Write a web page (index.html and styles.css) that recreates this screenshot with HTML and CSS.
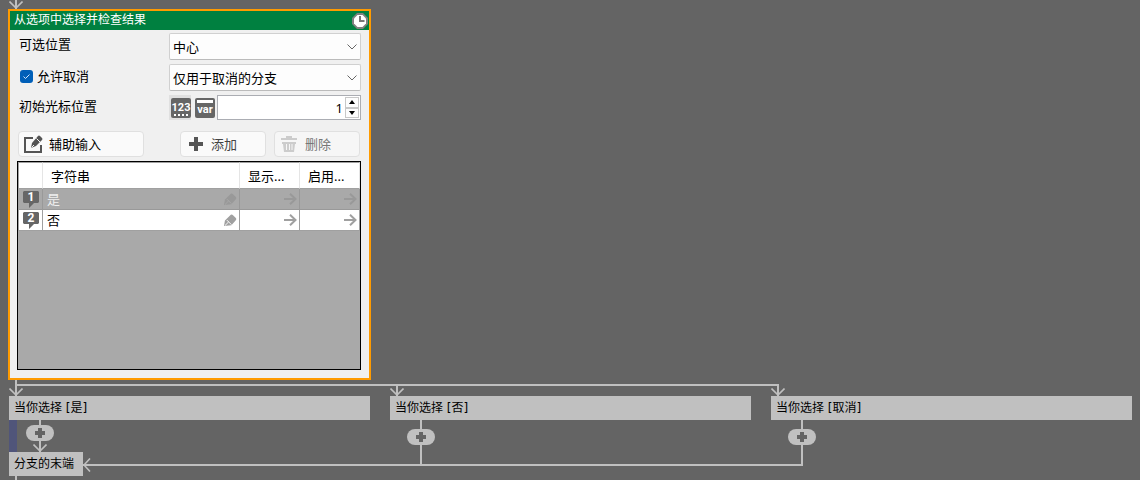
FILE: index.html
```html
<!DOCTYPE html>
<html lang="zh-CN">
<head>
    <meta charset="UTF-8">
    <meta name="viewport" content="width=device-width, initial-scale=1.0">
    <title>从选项中选择并检查结果</title>
    <link rel="stylesheet" href="styles.css">
</head>
<body>
    <!-- Shared icons -->
    <svg class="sprite" width="0" height="0" aria-hidden="true">
        <symbol id="head-down" viewBox="0 0 14 8">
            <path d="M.5.5 7 7 13.5.5" fill="none" stroke="currentColor" stroke-width="1.6"/>
        </symbol>
        <symbol id="chevron" viewBox="0 0 10 6">
            <path d="M.5.5 5 5 9.5.5" fill="none" stroke="currentColor"/>
        </symbol>
        <symbol id="pen" viewBox="0 0 14 14">
            <path d="M0 13 1 7 6.500 1.500Q8-.5 10 1.500L12.500 4Q14 5.500 12.500 7L8 12Z" fill="currentColor"/>
            <path d="M3 6.500 8 11.500M1 12.500 5 8.500" stroke="var(--cut)" fill="none"/>
        </symbol>
        <symbol id="arrow" viewBox="0 0 13 12">
            <path d="M0 6H11.500M6 .8 11.500 6 6 11.200" fill="none" stroke="currentColor" stroke-width="2"/>
        </symbol>
        <symbol id="bubble" viewBox="0 0 16 17">
            <path d="M1 0H15L16 1V11L15 12H11L6 17V12H1L0 11V1Z" fill="#666"/>
        </symbol>
        <symbol id="plus" viewBox="0 0 10 10">
            <path d="M3 0H7V3H10V7H7V10H3V7H0V3H3Z" fill="currentColor"/>
        </symbol>
    </svg>

    <main class="flow">
        <div class="entry">
            <svg class="head" width="14" height="8"><use href="#head-down"/></svg>
        </div>

        <section class="card">
            <header class="card-title">
                <h1>从选项中选择并检查结果</h1>
                <svg class="clock" width="16" height="16" viewBox="0 0 16 16">
                    <path d="M5 0H11L16 5V11L11 16H5L0 11V5Z" fill="#808080"/>
                    <path d="M5.500 2H10.500L14 5.500V10.500L10.500 14H5.500L2 10.500V5.500Z" fill="#fff"/>
                    <path d="M8 3V8H12.500" fill="none" stroke="#777" stroke-width="2"/>
                </svg>
            </header>

            <form class="card-body">
                <div class="row">
                    <label for="position">可选位置</label>
                    <div class="select">
                        <select id="position"><option>中心</option></select>
                        <svg width="10" height="6"><use href="#chevron"/></svg>
                    </div>
                </div>
                <div class="row">
                    <label class="check">
                        <input type="checkbox" checked>
                        <svg width="13" height="13" viewBox="0 0 13 13"><path d="M3.500 6.500 5.500 8.500 9.500 4.500" fill="none" stroke="#cfe4fa"/></svg>
                        允许取消
                    </label>
                    <div class="select">
                        <select aria-label="允许取消"><option>仅用于取消的分支</option></select>
                        <svg width="10" height="6"><use href="#chevron"/></svg>
                    </div>
                </div>
                <div class="row">
                    <label for="cursor">初始光标位置</label>
                    <div class="value">
                        <button type="button" class="mode active">
                            <svg width="20" height="20" viewBox="0 0 20 20">
                                <rect width="20" height="20" rx="2" fill="#666"/>
                                <text x="10" y="13" class="mode-text">123</text>
                                <path d="M3 17H17" stroke="#fff" stroke-width="2" stroke-dasharray="2 2"/>
                            </svg>
                        </button>
                        <button type="button" class="mode">
                            <svg width="20" height="20" viewBox="0 0 20 20">
                                <rect width="20" height="20" rx="2" fill="#666"/>
                                <path d="M2 3.500H18" stroke="#fff" stroke-width="3"/>
                                <text x="10" y="15" class="mode-text">var</text>
                            </svg>
                        </button>
                        <div class="spin">
                            <input id="cursor" type="number" value="1">
                            <div class="spin-buttons">
                                <button type="button" aria-label="+"><svg width="6" height="4" viewBox="0 0 6 4"><path d="M3 0 6 4H0Z"/></svg></button>
                                <button type="button" aria-label="-"><svg width="6" height="4" viewBox="0 0 6 4"><path d="M0 0H6L3 4Z"/></svg></button>
                            </div>
                        </div>
                    </div>
                </div>

                <div class="tools">
                    <button type="button" class="btn btn-wide">
                        <svg width="19" height="18" viewBox="0 0 19 18">
                            <path d="M9 3H1V17H17V10" fill="none" stroke="#555" stroke-width="2"/>
                            <path d="M7 13 8 8 14 1Q15 0 16.500 1.500L18 3Q19 4 18 5L12 11Z" fill="#555"/>
                            <path d="M12.500 3.500 16 7M7.500 12.500 10 10" stroke="#fafafa" fill="none"/>
                        </svg>
                        辅助输入
                    </button>
                    <button type="button" class="btn btn-add">
                        <svg width="14" height="14" viewBox="0 0 14 14"><path d="M5 0H9V5H14V9H9V14H5V9H0V5H5Z" fill="#555"/></svg>
                        添加
                    </button>
                    <button type="button" class="btn btn-delete" disabled>
                        <svg width="16" height="16" viewBox="0 0 16 16">
                            <path d="M5 2V0H11V2H16V4H0V2ZM1 6H15V8H14L13 16H3L2 8H1Z" fill="#ccc"/>
                            <path d="M5.500 8V14M8.500 8V14M11 8V14" stroke="#f6f6f6"/>
                        </svg>
                        删除
                    </button>
                </div>

                <div class="list">
                    <table>
                        <thead>
                            <tr><th class="col-no"></th><th>字符串</th><th class="col-flag">显示...</th><th class="col-flag">启用...</th></tr>
                        </thead>
                        <tbody>
                            <tr class="selected">
                                <td class="no"><svg width="16" height="17"><use href="#bubble"/><text x="8" y="10">1</text></svg></td>
                                <td><div class="cell">是<svg width="13" height="13"><use href="#pen"/></svg></div></td>
                                <td><div class="cell"><svg width="13" height="12"><use href="#arrow"/></svg></div></td>
                                <td><div class="cell"><svg width="13" height="12"><use href="#arrow"/></svg></div></td>
                            </tr>
                            <tr>
                                <td class="no"><svg width="16" height="17"><use href="#bubble"/><text x="8" y="10">2</text></svg></td>
                                <td><div class="cell">否<svg width="13" height="13"><use href="#pen"/></svg></div></td>
                                <td><div class="cell"><svg width="13" height="12"><use href="#arrow"/></svg></div></td>
                                <td><div class="cell"><svg width="13" height="12"><use href="#arrow"/></svg></div></td>
                            </tr>
                        </tbody>
                    </table>
                </div>
            </form>
        </section>

        <div class="branches">
            <section class="branch">
                <div class="fork"><svg class="head" width="14" height="8"><use href="#head-down"/></svg></div>
                <h2 class="node">当你选择 [是]</h2>
                <div class="path path-short">
                    <button type="button" class="add" aria-label="添加"><svg width="10" height="10"><use href="#plus"/></svg></button>
                    <svg class="head" width="14" height="8"><use href="#head-down"/></svg>
                </div>
                <div class="merge">
                    <div class="node node-end">分支的末端</div>
                    <div class="wire">
                        <svg width="8" height="14" viewBox="0 0 8 14"><path d="M7 .5 1 7 7 13.500" fill="none" stroke="currentColor" stroke-width="1.6"/></svg>
                    </div>
                </div>
                <div class="exit"></div>
            </section>

            <section class="branch">
                <div class="fork"><svg class="head" width="14" height="8"><use href="#head-down"/></svg></div>
                <h2 class="node">当你选择 [否]</h2>
                <div class="path">
                    <button type="button" class="add" aria-label="添加"><svg width="10" height="10"><use href="#plus"/></svg></button>
                </div>
                <div class="wire"></div>
            </section>

            <section class="branch">
                <div class="fork"><svg class="head" width="14" height="8"><use href="#head-down"/></svg></div>
                <h2 class="node">当你选择 [取消]</h2>
                <div class="path">
                    <button type="button" class="add" aria-label="添加"><svg width="10" height="10"><use href="#plus"/></svg></button>
                </div>
                <div class="wire wire-last"></div>
            </section>
        </div>
    </main>
</body>
</html>
```

FILE: styles.css
```css
* {
    box-sizing: border-box;
}

body {
    margin: 0;
    background-color: #646464;
    color: #000;
    font-family: "Noto Sans", "Noto Sans CJK SC", sans-serif;
    font-size: 13px;
    line-height: 20px;
    overflow: hidden;
}

svg {
    display: block;
    flex: none;
}

button, input, select {
    font: inherit;
    color: inherit;
    margin: 0;
    padding: 0;
}

h1, h2 {
    margin: 0;
    font-weight: normal;
}

.sprite {
    position: absolute;
}

.flow {
    padding: 0 8px 0 9px;
}

/* Wires */
.entry, .fork {
    display: flex;
    align-items: flex-end;
    color: #c0c0c0;
    background: linear-gradient(#c0c0c0, #c0c0c0) 6px 0 / 2px 100% no-repeat;
}

.entry {
    height: 9px;
}

.fork {
    position: relative;
    height: 16px;
}

.fork::before {
    content: "";
    position: absolute;
    top: 4px;
    left: 6px;
    right: -28px;
    height: 2px;
    background-color: #c0c0c0;
}

.branch:not(:first-child) .fork {
    background-position: 6px 4px;
}

.branch:last-child .fork::before {
    display: none;
}

.wire {
    height: 2px;
    margin-right: -20px;
    background-color: #c0c0c0;
}

.wire-last {
    width: 32px;
    margin-right: 0;
}

/* Card */
.card {
    width: calc((100% - 40px) / 3 + 2px);
    margin-left: -1px;
    border: 2px solid #ff9b00;
    background-color: #f0f0f0;
}

.card-title {
    display: flex;
    justify-content: space-between;
    align-items: center;
    height: 19px;
    padding: 0 1px 0 4px;
    background-color: #008040;
    color: #fff;
}

.card-title h1 {
    font-size: 12px;
    line-height: 16px;
    height: 18px;
}

.card-body {
    display: flex;
    flex-direction: column;
    gap: 4px;
    padding: 3px 8px 8px 7px;
}

.row {
    display: flex;
    justify-content: space-between;
    padding-left: 2px;
}

.row label {
    padding-top: 1px;
}

.row .check {
    display: flex;
    align-items: center;
    align-self: flex-start;
    gap: 4px;
    position: relative;
    padding-top: 2px;
    padding-left: 1px;
}

.check input {
    appearance: none;
    width: 13px;
    height: 13px;
    border-radius: 3px;
    background-color: #005fb8;
}

.check svg {
    position: absolute;
    left: 1px;
}

.select {
    position: relative;
    width: 192px;
}

.select select {
    appearance: none;
    display: block;
    width: 100%;
    height: 27px;
    padding: 0 24px 0 3px;
    border: 1px solid #d0d0d0;
    border-bottom-color: #bbb;
    border-radius: 2px;
    background-color: #fdfdfd;
}

.select svg {
    position: absolute;
    top: 11px;
    right: 4px;
    color: #666;
    pointer-events: none;
}

.value {
    display: flex;
    width: 192px;
    height: 25px;
}

.mode {
    flex: none;
    width: 24px;
    padding: 2px;
    border: 0;
    background: none;
}

.mode.active {
    background: linear-gradient(#e0e0e0, #e0e0e0) 0 0 / 22px 100% no-repeat;
}

.mode-text {
    font-family: Roboto, "Liberation Sans", sans-serif;
    font-size: 11px;
    font-weight: bold;
    text-anchor: middle;
    fill: #fff;
}

.spin {
    display: flex;
    flex: 1;
    min-width: 0;
    padding: 1px;
    border: 1px solid #abadb3;
    background-color: #fff;
}

.spin input {
    appearance: textfield;
    flex: 1;
    min-width: 0;
    padding-right: 2px;
    border: 0;
    background: none;
    text-align: right;
}

.spin input::-webkit-inner-spin-button {
    appearance: none;
}

.spin-buttons {
    display: flex;
    flex-direction: column;
    width: 14px;
}

.spin-buttons button {
    display: flex;
    flex: 1;
    align-items: center;
    justify-content: center;
    border: 1px solid #c8c8c8;
    background-color: #fdfdfd;
}

/* Buttons */
.tools {
    display: flex;
    gap: 8px;
    padding: 7px 1px 0;
}

.btn {
    display: flex;
    align-items: center;
    gap: 8px;
    width: 86px;
    height: 26px;
    padding: 0 6px 1px;
    border: 1px solid #e0e0e0;
    border-radius: 4px;
    background-color: #fafafa;
}

.btn-wide {
    gap: 6px;
    width: 126px;
    padding: 0 5px;
    margin-right: auto;
}

.btn-add {
    padding-left: 8px;
    color: #444;
}

.btn-delete {
    color: #777;
    background-color: #f6f6f6;
}

/* List */
.list {
    height: 209px;
    border: 1px solid #000;
    background-color: #a9a9a9;
}

.list table {
    width: 100%;
    table-layout: fixed;
    border-collapse: separate;
    border-spacing: 0;
    border-left: 1px solid #a0a0a0;
}

.list th {
    height: 27px;
    padding: 0 8px;
    border-top: 1px solid #a0a0a0;
    border-right: 1px solid #e5e5e5;
    border-bottom: 1px solid #a0a0a0;
    background-color: #fff;
    font-weight: normal;
    text-align: left;
}

.list .col-no {
    width: 24px;
}

.list .col-flag {
    width: 60px;
}

.list td {
    --cut: #fff;
    height: 21px;
    padding: 0 2px 0 4px;
    border-right: 1px solid #a0a0a0;
    border-bottom: 1px solid #a0a0a0;
    background-color: #fff;
}

.list .selected td {
    --cut: #a9a9a9;
    background-color: #a9a9a9;
    border-color: #999;
    color: #f0f0f0;
}

.cell {
    display: flex;
    align-items: center;
    height: 20px;
}

.cell svg {
    margin-left: auto;
    color: #a0a0a0;
}

.selected .cell svg {
    color: #999;
}

.no text {
    font-family: Roboto, "Liberation Sans", sans-serif;
    font-size: 12px;
    font-weight: bold;
    text-anchor: middle;
    fill: #fff;
}

/* Branches */
.branches {
    display: grid;
    grid-template-columns: repeat(3, 1fr);
    gap: 20px;
}

.node {
    height: 24px;
    padding: 0 5px;
    background-color: #c0c0c0;
    font-family: "DejaVu Sans", "Noto Sans CJK SC", sans-serif;
    font-size: 12px;
    line-height: 25px;
}

.node-end {
    padding-right: 9px;
}

.path {
    height: 44px;
    padding: 9px 0 0 17px;
    color: #c0c0c0;
    background: linear-gradient(#c0c0c0, #c0c0c0) 30px 0 / 2px 100% no-repeat;
}

.path-short {
    display: flex;
    flex-direction: column;
    justify-content: space-between;
    height: 32px;
    padding: 5px 0 0 9px;
    border-left: 8px solid #50557a;
    background-position: 22px 0;
}

.path-short .head {
    margin-left: 7px;
}

.add {
    display: flex;
    align-items: center;
    justify-content: center;
    width: 28px;
    height: 16px;
    border: 0;
    border-radius: 8px;
    background-color: #c0c0c0;
    color: #646464;
}

.merge {
    display: flex;
}

.merge .wire {
    display: flex;
    flex: 1;
    align-items: center;
    margin-top: 12px;
    color: #c0c0c0;
}

.exit {
    width: 2px;
    height: 4px;
    margin-left: 6px;
    background-color: #c0c0c0;
}
```
